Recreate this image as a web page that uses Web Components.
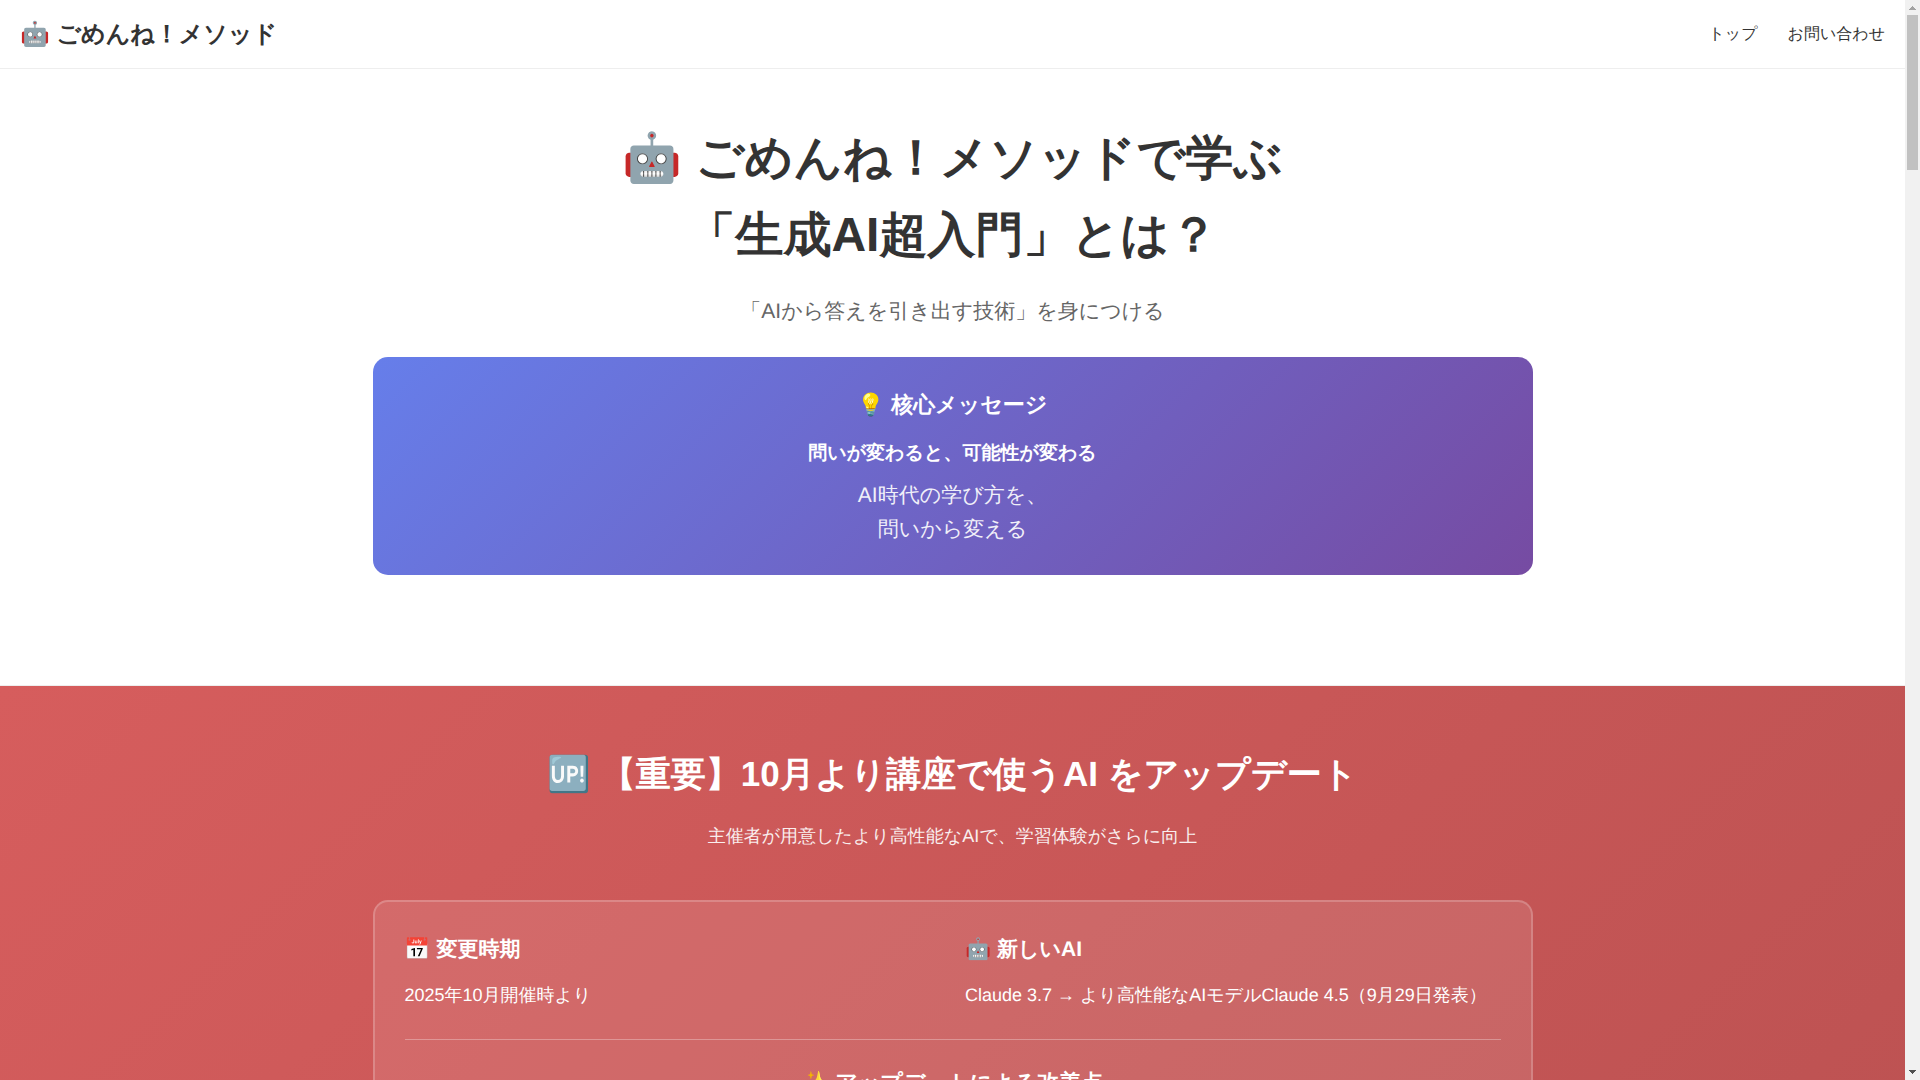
<!DOCTYPE html>
<html lang="ja">
<head>
<meta charset="utf-8">
<meta name="viewport" content="width=device-width, initial-scale=1">
<title>ごめんね！メソッド</title>
<style>
  html, body { margin: 0; height: 100%; }
  body {
    font-family: "Liberation Sans", sans-serif;
    font-size: 16px;
    line-height: 1.6;
    text-rendering: geometricPrecision;
    color: #333;
    background: #fff;
    overflow: hidden;
  }
</style>
</head>
<body>
<page-frame>
  <site-header>
    🤖 ごめんね！メソッド
    <nav-link slot="nav" href="#top">トップ</nav-link>
    <nav-link slot="nav" href="#contact">お問い合わせ</nav-link>
  </site-header>
  <hero-section id="top">
    <span slot="title">🤖 ごめんね！メソッドで学ぶ<br>「生成AI超入門」とは？</span>
    <span slot="subtitle">「AIから答えを引き出す技術」を身につける</span>
    <core-message>
      <span slot="heading">💡 核心メッセージ</span>
      <span slot="lead">問いが変わると、可能性が変わる</span>
      AI時代の学び方を、<br>問いから変える
    </core-message>
  </hero-section>
  <update-section>
    <span slot="title">🆙 【重要】10月より講座で使うAI をアップデート</span>
    <span slot="subtitle">主催者が用意したより高性能なAIで、学習体験がさらに向上</span>
    <update-card>
      <info-item slot="info" heading="📅 変更時期">2025年10月開催時より</info-item>
      <info-item slot="info" heading="🤖 新しいAI">Claude 3.7 → より高性能なAIモデルClaude 4.5（9月29日発表）</info-item>
      <span slot="more">✨ アップデートによる改善点</span>
    </update-card>
  </update-section>
</page-frame>

<script>
  const define = (name, html, setup) => {
    const template = document.createElement('template');
    template.innerHTML = html;
    customElements.define(name, class extends HTMLElement {
      constructor() {
        super();
        this.attachShadow({ mode: 'open' }).append(template.content.cloneNode(true));
      }
      connectedCallback() {
        if (setup) setup(this, this.shadowRoot);
      }
    });
  };

  define('page-frame', `
    <style>
      :host { display: grid; grid-template-columns: minmax(0, 1fr) 15px; height: 100vh; }
      main { overflow: hidden; }
    </style>
    <main><slot></slot></main>
    <scroll-rail></scroll-rail>`);

  define('scroll-rail', `
    <style>
      :host { display: flex; flex-direction: column; background: #f1f1f1; }
      svg { display: block; width: 15px; height: 15px; }
      .track { flex: 1; padding: 0 2px; }
      .thumb { height: 14.76%; background: #c1c1c1; }
    </style>
    <svg viewBox="0 0 15 15" shape-rendering="crispEdges" aria-hidden="true"><path fill="#a3a3a3" d="M7 6h1v1h1v1h1v1h1v1H4V9h1V8h1V7h1z"/></svg>
    <div class="track"><div class="thumb"></div></div>
    <svg viewBox="0 0 15 15" shape-rendering="crispEdges" aria-hidden="true"><path fill="#505050" d="M4 5h7v1h-1v1H9v1H8v1H7V8H6V7H5V6H4z"/></svg>`);

  define('site-header', `
    <style>
      :host { display: block; background: #fff; border-bottom: 1px solid #eee; }
      header { display: flex; justify-content: space-between; align-items: center; padding: 16px 20px 14px; }
      .logo { font-size: 24px; line-height: 38px; font-weight: bold; }
      nav { display: flex; gap: 30px; }
    </style>
    <header>
      <div class="logo"><slot></slot></div>
      <nav><slot name="nav"></slot></nav>
    </header>`);

  define('nav-link', `
    <style>
      :host { display: block; }
      a { color: inherit; text-decoration: none; }
    </style>
    <a><slot></slot></a>`,
    (host, root) => { root.querySelector('a').href = host.getAttribute('href'); });

  define('hero-section', `
    <style>
      :host { display: block; padding: 51px 20px 60px; text-align: center; border-bottom: 1px solid #eee; }
      .inner { max-width: 1160px; margin: 0 auto 50px; }
      h1 { margin: 0 0 21px; font-size: 48px; line-height: 77px; }
      p { margin: 0 0 28px; font-size: 21px; line-height: 34px; color: #666; }
    </style>
    <div class="inner">
      <h1><slot name="title"></slot></h1>
      <p><slot name="subtitle"></slot></p>
      <slot></slot>
    </div>`);

  define('core-message', `
    <style>
      :host { display: block; padding: 30px 30px 28px; border-radius: 15px; color: #fff;
              background: linear-gradient(135deg, #667eea 0%, #764ba2 100%); }
      h2 { margin: 0 0 15px; font-size: 22px; line-height: 36px; }
      .lead { margin: 0 0 10px; font-size: 19px; line-height: 31px; font-weight: bold; }
      .body { margin: 0; font-size: 21px; line-height: 34px; opacity: 0.9; }
    </style>
    <h2><slot name="heading"></slot></h2>
    <p class="lead"><slot name="lead"></slot></p>
    <p class="body"><slot></slot></p>`);

  define('update-section', `
    <style>
      :host { display: block; padding: 60px 20px; color: #fff; text-align: center;
              background: linear-gradient(135deg, #d65d5d 0%, #b85050 100%); }
      .inner { max-width: 1160px; margin: 0 auto; }
      h2 { margin: 0 0 18px; font-size: 35px; line-height: 58px; }
      p { margin: 0 0 50px; font-size: 18px; line-height: 28px; opacity: 0.9; }
    </style>
    <div class="inner">
      <h2><slot name="title"></slot></h2>
      <p><slot name="subtitle"></slot></p>
      <slot></slot>
    </div>`);

  define('update-card', `
    <style>
      :host { display: block; min-height: 620px; padding: 30px; border-radius: 15px;
              background: rgba(255, 255, 255, 0.1); border: 2px solid rgba(255, 255, 255, 0.2); }
      .info { display: grid; grid-template-columns: 1fr 1fr; gap: 25px; text-align: left;
              padding-bottom: 30px; border-bottom: 1px solid rgba(255, 255, 255, 0.3); }
      h3 { margin: 25px 0 0; font-size: 22px; line-height: 36px; }
    </style>
    <div class="info"><slot name="info"></slot></div>
    <h3><slot name="more"></slot></h3>`);

  define('info-item', `
    <style>
      :host { display: block; }
      h3 { margin: 0 0 13px; font-size: 21px; line-height: 36px; }
      p { margin: 0; font-size: 18px; line-height: 28px; }
    </style>
    <h3></h3>
    <p><slot></slot></p>`,
    (host, root) => { root.querySelector('h3').textContent = host.getAttribute('heading'); });
</script>
</body>
</html>
